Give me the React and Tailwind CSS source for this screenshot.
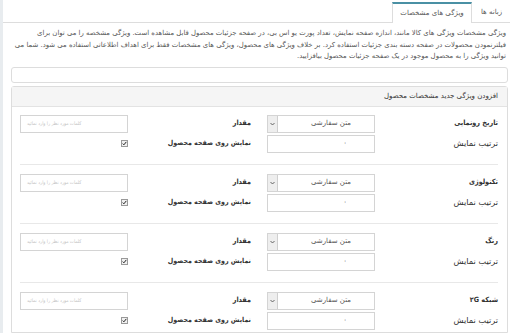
import React from "react";

const rows = ["تاریخ رونمایی", "تکنولوژی", "رنگ", "شبکه ۲G"];

const COND = { fontFamily: '"DejaVu Sans Condensed", "DejaVu Sans", sans-serif' };

function Chevron() {
  return (
    <svg width="5" height="4" viewBox="0 0 5 4" className="block">
      <path d="M0.5 1 L2.5 3 L4.5 1" fill="none" stroke="#555" strokeWidth="0.9" />
    </svg>
  );
}

function Row({ label, first, last }) {
  return (
    <div
      className={`flex flex-col gap-[2px] ${first ? "pt-[8px]" : "pt-[9px]"} ${
        last ? "" : "pb-[11px] border-b border-[#e8e8e8]"
      }`}
    >
      <div className="flex h-[18px] items-center">
        <div className="w-[123px] font-bold text-[#333] text-[7.2px] font-stretch-condensed" style={COND}>
          {label}
        </div>
        <div className="w-[108px] h-[18px] border border-[#d4d4d4] flex items-center bg-white">
          <div className="flex-1 pr-[23px] text-[7px] text-[#555]">متن سفارشی</div>
          <div className="w-[10px] h-full bg-[#eeeeee] border-r border-[#cfcfcf] flex items-center justify-center">
            <Chevron />
          </div>
        </div>
        <div className="w-[139px] pr-[16px] font-bold text-[#333] text-[7.2px] font-stretch-condensed" style={COND}>
          مقدار
        </div>
        <div
          className="w-[108px] h-[18px] border border-[#d4d4d4] flex items-center justify-end pl-[6px] text-[4.8px] text-[#c4c4c4] font-stretch-condensed"
          style={COND}
        >
          کلمات مورد نظر را وارد نمائید
        </div>
      </div>
      <div className="flex h-[18px] items-center">
        <div className="w-[123px] text-[#333] text-[8.2px]">ترتیب نمایش</div>
        <div className="w-[108px] h-[18px] border border-[#d4d4d4] flex items-center pr-[27px] text-[7px] text-[#555]">۰</div>
        <div className="w-[139px] pr-[16px] font-bold text-[#333] text-[7px] font-stretch-condensed" style={COND}>
          نمایش روی صفحه محصول
        </div>
        <div className="w-[108px] flex items-center">
          <div className="w-[7px] h-[7px] border border-[#999] bg-[#f0f0f0] flex items-center justify-center">
            <svg width="5" height="5" viewBox="0 0 5 5" className="block">
              <path d="M0.7 2.6 L1.9 3.8 L4.3 0.9" fill="none" stroke="#222" strokeWidth="1" />
            </svg>
          </div>
        </div>
      </div>
    </div>
  );
}

export default function App() {
  return (
    <div
      className="w-[510px] h-[333px] overflow-hidden bg-white flex"
      style={{ fontFamily: '"DejaVu Sans", sans-serif' }}
    >
      <div className="w-[3px] h-full bg-[#e8ecef] shrink-0" />
      <div dir="rtl" className="flex-1 flex flex-col">
        <div className="flex items-end h-[23px] border-b border-[#dddddd]">
          <div className="w-[39px] h-[20px] flex items-center justify-center text-[7px] text-[#555]">زبانه ها</div>
          <div className="w-[80px] h-[21px] -mb-px bg-white border-t-2 border-t-[#4a90a4] border-x border-x-[#dddddd] flex items-center justify-center text-[7px] text-[#555]">
            ویژگی های مشخصات
          </div>
        </div>
        <div className="pr-[5px] pt-[5px] text-[6.9px] leading-[11.5px] text-[#555] whitespace-nowrap">
          <div>
            ویژگی مشخصات ویژگی های کالا مانند، اندازه صفحه نمایش، تعداد پورت یو اس بی، در صفحه جزئیات محصول قابل مشاهده است. ویژگی مشخصه را می توان برای
          </div>
          <div>
            فیلترنمودن محصولات در صفحه دسته بندی جزئیات استفاده کرد. بر خلاف ویژگی های محصول، ویژگی های مشخصات فقط برای اهداف اطلاعاتی استفاده می شود. شما می
          </div>
          <div>توانید ویژگی را به محصول موجود در یک صفحه جزئیات محصول بیافزایید.</div>
        </div>
        <div className="mt-[4px] mr-[3px] ml-[8px] h-[16px] border border-[#dddddd] rounded-[3px] bg-white" />
        <div className="mt-[3px] mr-[3px] ml-[8px] border border-[#dddddd] rounded-t-[3px] flex-1 flex flex-col">
          <div className="h-[20px] bg-[#f5f5f5] border-b border-[#e3e3e3] flex items-center pr-[9px] text-[7px] text-[#333]">
            افزودن ویژگی جدید مشخصات محصول
          </div>
          <div className="pr-[9px] pl-[8px]">
            {rows.map((r, i) => (
              <Row key={r} label={r} first={i === 0} last={i === rows.length - 1} />
            ))}
          </div>
        </div>
      </div>
    </div>
  );
}
